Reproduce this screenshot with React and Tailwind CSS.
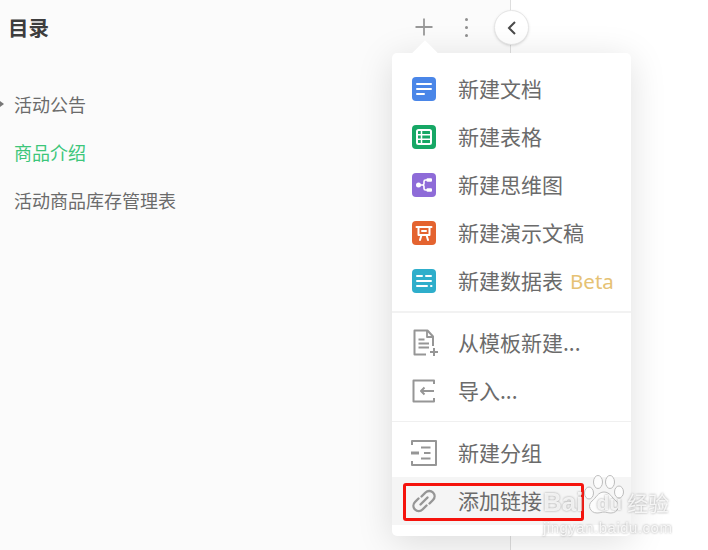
import React from "react";

const font = { fontFamily: '"Noto Sans CJK SC", "Noto Sans", sans-serif' };

function Tile({ color, children }) {
  return (
    <svg width="24" height="24" viewBox="0 0 24 24" className="shrink-0">
      <rect x="0" y="0" width="24" height="24" rx="4" fill={color} />
      {children}
    </svg>
  );
}

const W = { stroke: "#fff", strokeWidth: 2, fill: "none", strokeLinecap: "round", strokeLinejoin: "round" };

const DocIcon = () => (
  <Tile color="#4a86e8">
    <path d="M5 7h14M5 12h14M5 17h7" {...W} />
  </Tile>
);
const SheetIcon = () => (
  <Tile color="#16a765">
    <rect x="5" y="5" width="14" height="14" rx="1.5" {...W} />
    <path d="M5 9.7h14M5 14.3h14M9.500 5v14" stroke="#fff" strokeWidth="1.5" fill="none" />
  </Tile>
);
const MindIcon = () => (
  <Tile color="#8e6bd8">
    <circle cx="6.500" cy="12" r="2.500" fill="#fff" />
    <path d="M7 12h3.500c1 0 1.500-.5 1.500-1.500V8.500C12 7.500 12.500 7 13.500 7H15M10.500 12c1 0 1.500.5 1.500 1.500v2c0 1 .5 1.500 1.500 1.500H15" stroke="#fff" strokeWidth="1.600" fill="none" />
    <rect x="14.500" y="5.300" width="5.500" height="3.400" rx="1" fill="#fff" />
    <rect x="14.500" y="15.300" width="5.500" height="3.400" rx="1" fill="#fff" />
  </Tile>
);
const SlideIcon = () => (
  <Tile color="#e4632f">
    <path d="M4.500 6h15" {...W} />
    <path d="M6.500 6.500v7.500h11V6.500M9.500 14l-1.500 5M14.500 14l1.500 5M10 10h4" {...W} />
  </Tile>
);
const DataIcon = () => (
  <Tile color="#2eaecb">
    <path d="M5 7h5M14 7h5M5 12h14M5 17h10M19 17h.5" {...W} />
  </Tile>
);

const G = { stroke: "#969696", strokeWidth: 2, fill: "none", strokeLinejoin: "round" };

const TemplateIcon = () => (
  <svg width="28" height="28" viewBox="0 0 28 28" className="shrink-0">
    <path d="M21 17V7.500L15.500 1.500H2.500V25.500H14" {...G} />
    <path d="M15 2v6h6M6.500 10.500h6M6.500 14.500h10.500M6.500 18.500h10.500" {...G} strokeWidth="1.800" />
    <path d="M22 19v8M18 23h8" {...G} />
  </svg>
);
const ImportIcon = () => (
  <svg width="24" height="24" viewBox="0 0 24 24" className="shrink-0">
    <path d="M22 5V1.500H1.500v21H22V19" {...G} />
    <path d="M22 12H9M12.500 8.500L9 12l3.500 3.500" {...G} />
  </svg>
);
const GroupIcon = () => (
  <svg width="28" height="28" viewBox="0 0 28 28" className="shrink-0 -ml-[2px]">
    <path d="M2 6V2h24v24H2v-4" {...G} />
    <path d="M1 14h8" stroke="#969696" strokeWidth="3" />
    <path d="M11 8.500h9.500M14 14h6.500M11 19.500h9.500" {...G} />
  </svg>
);
const LinkIcon = () => (
  <svg width="28" height="28" viewBox="0 0 28 28" className="shrink-0 -ml-[2px]">
    <path d="M11.500 9.500l4-4a5.300 5.300 0 0 1 7.500 7.500l-3.500 3.500" {...G} strokeWidth="2.400" strokeLinecap="round" />
    <path d="M16.500 18.500l-4 4a5.300 5.300 0 0 1-7.500-7.500l3.500-3.500" {...G} strokeWidth="2.400" strokeLinecap="round" />
    <path d="M10.500 17.500l7-7" {...G} strokeWidth="2.400" strokeLinecap="round" />
  </svg>
);

function Item({ icon, label, extra }) {
  return (
    <div className="flex items-center h-12 pl-[20px] pr-2">
      <div className="w-[46px] flex items-center shrink-0">{icon}</div>
      <span className="text-[21px] leading-none pb-[2px] text-[#6b6b6b] whitespace-nowrap">{label}</span>
      {extra}
    </div>
  );
}

export default function App() {
  return (
    <div style={font} className="relative w-[708px] h-[550px] overflow-hidden bg-white flex">
      {/* sidebar */}
      <aside className="w-[511px] h-full bg-[#fbfbfb] border-r border-[#dedede] shrink-0">
        <div className="flex items-center h-[54px] pl-[8px]">
          <h1 className="text-[20.500px] font-bold text-[#3d3d3d] leading-none">目录</h1>
        </div>
        <nav className="mt-[26px] pl-[14px] text-[18px] leading-none">
          <div className="relative h-12 flex items-center text-[#6b6b6b]">
            <span className="absolute left-[-14px] top-[21px] w-0 h-0 border-y-[3.500px] border-y-transparent border-l-[4px] border-l-[#777777]" />
            活动公告
          </div>
          <div className="h-12 flex items-center text-[#3cc67a]">商品介绍</div>
          <div className="h-12 flex items-center text-[#6b6b6b]">活动商品库存管理表</div>
        </nav>
      </aside>

      {/* header actions */}
      <svg width="20" height="20" viewBox="0 0 20 20" className="absolute left-[414px] top-[17px]">
        <path d="M10 1.500v17M1.500 10h17" stroke="#999999" strokeWidth="1.800" />
      </svg>
      <div className="absolute left-[465px] top-[18px] flex flex-col gap-[5px]">
        <span className="w-[3px] h-[3px] rounded-full bg-[#8f8f8f]" />
        <span className="w-[3px] h-[3px] rounded-full bg-[#8f8f8f]" />
        <span className="w-[3px] h-[3px] rounded-full bg-[#8f8f8f]" />
      </div>
      <div className="absolute left-[494px] top-[10px] w-[35px] h-[35px] rounded-full bg-white border border-[#e6e6e6] shadow-sm flex items-center justify-center">
        <svg width="12" height="16" viewBox="0 0 12 16">
          <path d="M9 2L3 8l6 6" stroke="#4a4a4a" strokeWidth="2" fill="none" />
        </svg>
      </div>

      {/* popup menu */}
      <div className="absolute left-[392px] top-[53px] w-[239px] h-[483px] bg-white rounded-[5px] shadow-[0_6px_36px_rgba(0,0,0,0.13)]">
        <span className="absolute left-[24px] top-[-9px] w-[18px] h-[18px] rotate-45 bg-white" />
        <div className="relative pt-[12px]">
          <Item icon={<DocIcon />} label="新建文档" />
          <Item icon={<SheetIcon />} label="新建表格" />
          <Item icon={<MindIcon />} label="新建思维图" />
          <Item icon={<SlideIcon />} label="新建演示文稿" />
          <Item
            icon={<DataIcon />}
            label="新建数据表"
            extra={<span className="ml-[7px] text-[20.500px] leading-none text-[#e6c274]" style={{ fontFamily: '"Noto Sans", sans-serif' }}>Beta</span>}
          />
          <div className="mt-[6px] mb-[6px] h-[2px] bg-[#f2f2f2]" />
          <Item icon={<TemplateIcon />} label="从模板新建..." />
          <Item icon={<ImportIcon />} label="导入..." />
          <div className="mt-[6px] mb-[7px] h-[1px] bg-[#f0f0f0]" />
          <Item icon={<GroupIcon />} label="新建分组" />
          <div className="bg-[#f5f5f5]">
            <Item icon={<LinkIcon />} label="添加链接" />
          </div>
        </div>
      </div>

      {/* red annotation */}
      <div className="absolute left-[403px] top-[483px] w-[181px] h-[38px] border-[3px] border-[#f5130d] rounded-[3px]" />

      {/* watermark */}
      <svg width="44" height="44" viewBox="0 0 44 44" className="absolute left-[582px] top-[473px]">
        <g fill="#ffffff" fillOpacity="0.7" stroke="#bdbdbd" strokeWidth="1">
          <ellipse cx="7" cy="20" rx="4.500" ry="6" />
          <ellipse cx="16" cy="9" rx="4.500" ry="6.500" />
          <ellipse cx="28" cy="9" rx="4.500" ry="6.500" />
          <ellipse cx="37" cy="19" rx="4.500" ry="6" />
          <path d="M22 19c6 0 8 6 12 9 5 4 2 12-5 12-3 0-5-1-7-1s-4 1-7 1c-7 0-10-8-5-12 4-3 6-9 12-9z" />
        </g>
      </svg>
      <div className="absolute left-[543px] top-[490px] text-white/80 pointer-events-none leading-none" style={{ fontFamily: '"Liberation Sans", sans-serif' }}>
        <div className="flex items-center h-[24px] text-[26px] font-bold drop-shadow-[0_0_1px_rgba(130,130,130,0.9)]">
          <span>Bai</span>
          <span className="ml-[13px] text-[21px]">du</span>
          <span className="ml-[5px] text-[21px] font-normal" style={font}>经验</span>
        </div>
        <div className="mt-[6px] text-[15px] tracking-[0.5px] drop-shadow-[0_0_1px_rgba(130,130,130,0.9)]">jingyan.baidu.com</div>
      </div>
    </div>
  );
}
